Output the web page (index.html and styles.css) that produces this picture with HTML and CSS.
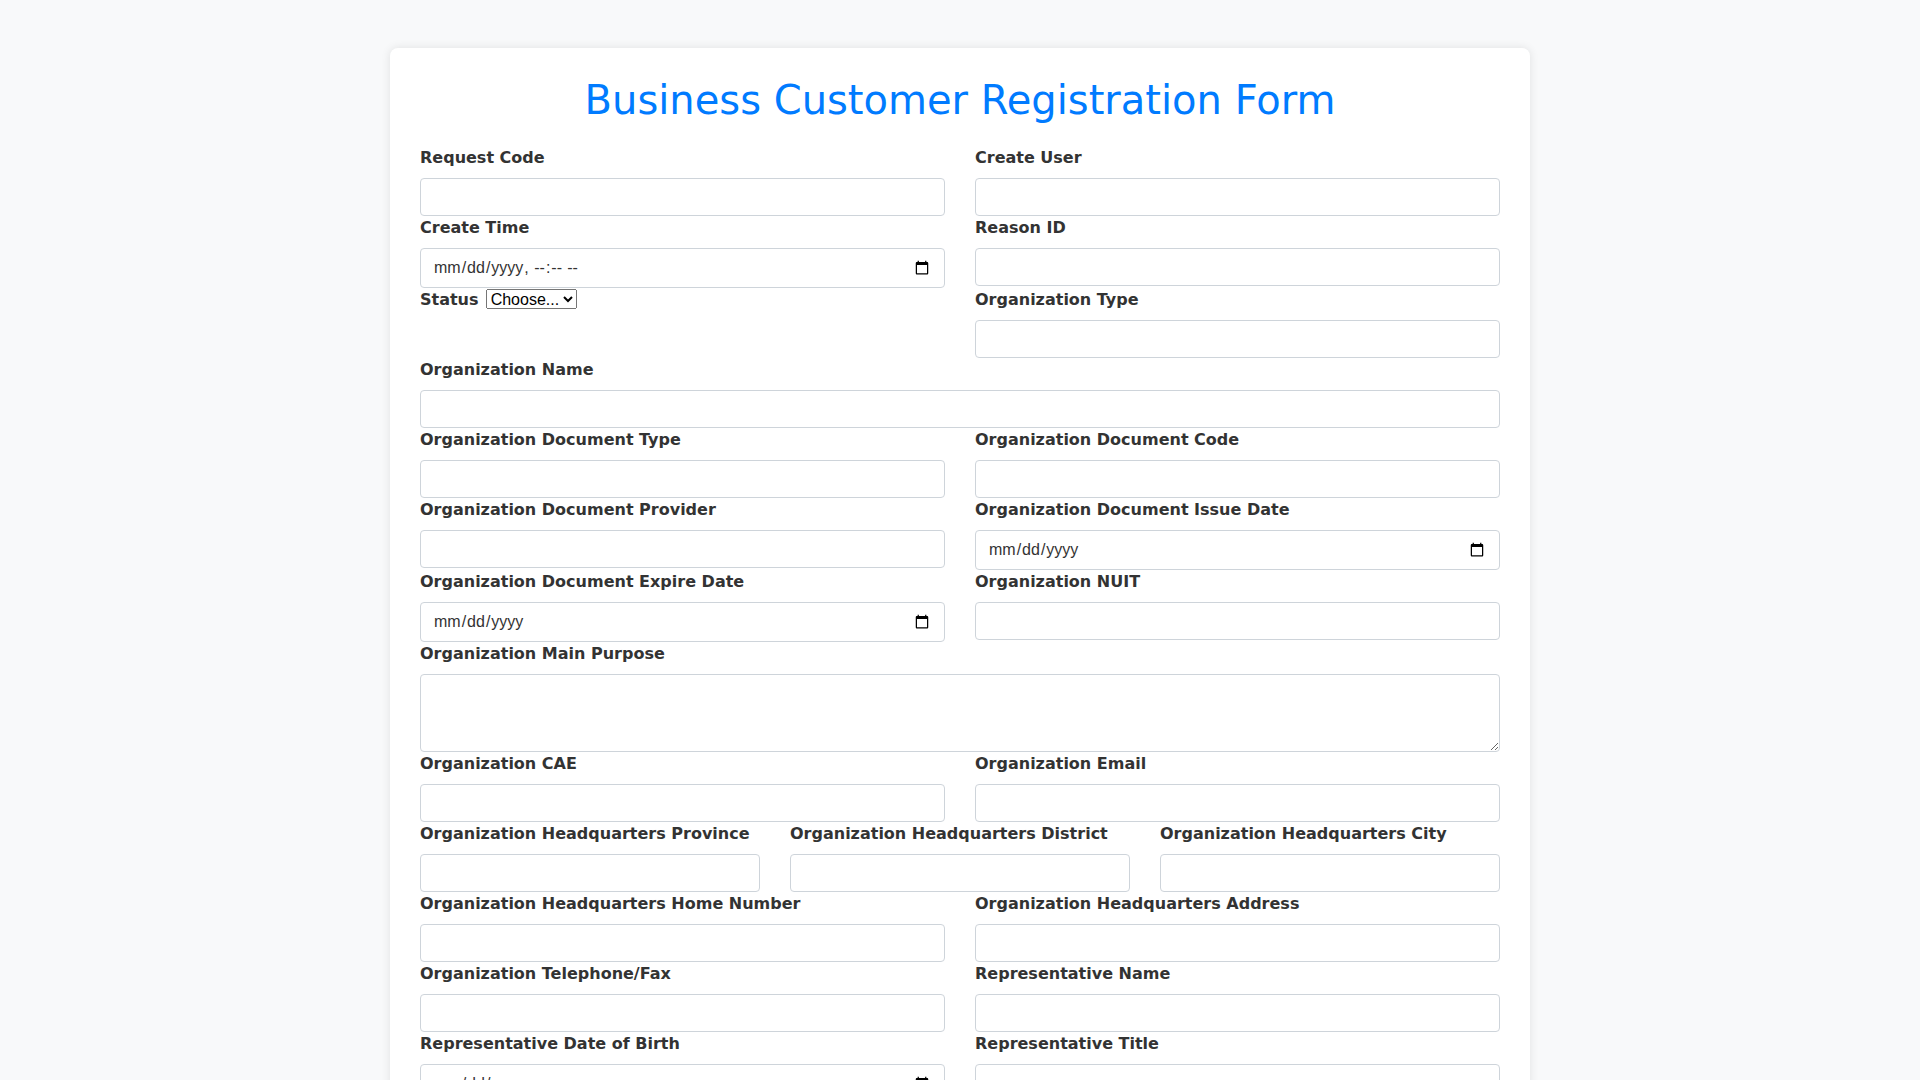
FILE: index.html
```html
<!DOCTYPE html>
<html lang="en">
<head>
<meta charset="utf-8">
<title>Business Customer Registration Form</title>
<link rel="stylesheet" href="styles.css">
</head>
<body>
<div class="card">
  <h1 class="title">Business Customer Registration Form</h1>
  <form class="form">
    <div class="row">
      <div class="field"><label>Request Code</label><input class="control" type="text"></div>
      <div class="field"><label>Create User</label><input class="control" type="text"></div>
    </div>
    <div class="row">
      <div class="field"><label>Create Time</label><input class="control date" type="datetime-local"></div>
      <div class="field"><label>Reason ID</label><input class="control" type="text"></div>
    </div>
    <div class="row">
      <div class="field"><label class="inline-label">Status</label> <select class="select"><option>Choose...</option><option>Active</option><option>Inactive</option></select></div>
      <div class="field"><label>Organization Type</label><input class="control" type="text"></div>
    </div>
    <div class="row">
      <div class="field"><label>Organization Name</label><input class="control" type="text"></div>
    </div>
    <div class="row">
      <div class="field"><label>Organization Document Type</label><input class="control" type="text"></div>
      <div class="field"><label>Organization Document Code</label><input class="control" type="text"></div>
    </div>
    <div class="row">
      <div class="field"><label>Organization Document Provider</label><input class="control" type="text"></div>
      <div class="field"><label>Organization Document Issue Date</label><input class="control date" type="date"></div>
    </div>
    <div class="row">
      <div class="field"><label>Organization Document Expire Date</label><input class="control date" type="date"></div>
      <div class="field"><label>Organization NUIT</label><input class="control" type="text"></div>
    </div>
    <div class="row">
      <div class="field"><label>Organization Main Purpose</label><textarea class="control area" rows="3"></textarea></div>
    </div>
    <div class="row">
      <div class="field"><label>Organization CAE</label><input class="control" type="text"></div>
      <div class="field"><label>Organization Email</label><input class="control" type="email"></div>
    </div>
    <div class="row">
      <div class="field"><label>Organization Headquarters Province</label><input class="control" type="text"></div>
      <div class="field"><label>Organization Headquarters District</label><input class="control" type="text"></div>
      <div class="field"><label>Organization Headquarters City</label><input class="control" type="text"></div>
    </div>
    <div class="row">
      <div class="field"><label>Organization Headquarters Home Number</label><input class="control" type="text"></div>
      <div class="field"><label>Organization Headquarters Address</label><input class="control" type="text"></div>
    </div>
    <div class="row">
      <div class="field"><label>Organization Telephone/Fax</label><input class="control" type="text"></div>
      <div class="field"><label>Representative Name</label><input class="control" type="text"></div>
    </div>
    <div class="row">
      <div class="field"><label>Representative Date of Birth</label><input class="control date" type="date"></div>
      <div class="field"><label>Representative Title</label><input class="control" type="text"></div>
    </div>
    <div class="row">
      <div class="field"><label>Representative Document Type</label><input class="control" type="text"></div>
      <div class="field"><label>Representative Document Code</label><input class="control" type="text"></div>
    </div>
  </form>
</div>
</body>
</html>
```
FILE: styles.css
```css
html, body {
  margin: 0;
  padding: 0;
}
body {
  background: #f8f9fa;
  font-family: "DejaVu Sans", sans-serif;
  color: #333333;
  padding-top: 48px;
}
.card {
  width: 1140px;
  box-sizing: border-box;
  margin: 0 auto;
  background: #ffffff;
  border-radius: 8px;
  box-shadow: 0 0 10px rgba(0, 0, 0, 0.1);
  padding: 28px 30px 40px;
}
.title {
  margin: 0 0 22px;
  font-family: "DejaVu Sans", sans-serif;
  font-weight: normal;
  font-size: 40px;
  line-height: 48px;
  text-align: center;
  color: #007bff;
}
.form {
  display: flex;
  flex-direction: column;
}
.row {
  display: flex;
  gap: 30px;
  align-items: flex-start;
}
.field {
  flex: 1 1 0;
  min-width: 0;
}
label {
  display: block;
  font-weight: bold;
  font-size: 16px;
  line-height: 24px;
  margin-bottom: 8px;
  color: #333333;
}
.inline-label {
  display: inline;
  margin: 0 2px 0 0;
}
.control {
  display: block;
  width: 100%;
  box-sizing: border-box;
  height: 38px;
  padding: 6px 12px;
  border: 1px solid #ced4da;
  border-radius: 4px;
  background: #ffffff;
  font-family: "Liberation Sans", Arial, sans-serif;
  font-size: 16px;
  color: #333333;
  margin: 0;
}
.date {
  height: 40px;
}
.area {
  height: 78px;
  resize: vertical;
}
.select {
  font-family: "Liberation Sans", Arial, sans-serif;
  font-size: 16px;
  height: 20px;
  padding: 0;
  color: #000000;
  vertical-align: baseline;
}
```
